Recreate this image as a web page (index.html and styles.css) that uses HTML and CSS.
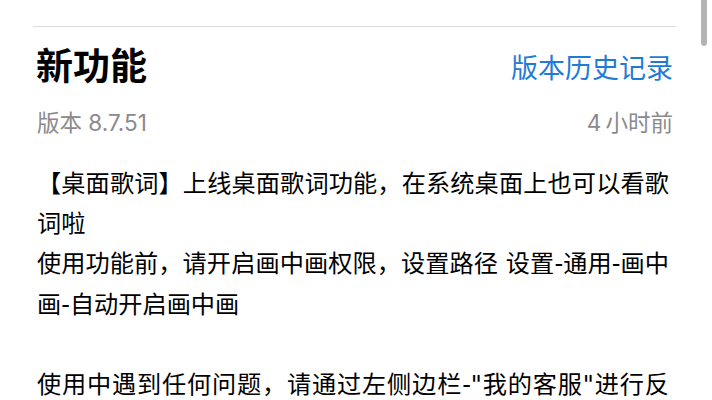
FILE: index.html
```html
<!DOCTYPE html>
<html lang="zh-CN">
<head>
<meta charset="utf-8">
<link rel="stylesheet" href="styles.css">
</head>
<body>
<div class="page">
  <div class="scrollbar"></div>
  <section class="notes">
    <hr class="divider">
    <div class="head">
      <h1 class="title">新功能</h1>
      <a class="history">版本历史记录</a>
    </div>
    <div class="meta">
      <span class="version">版本 8.7.51</span>
      <span class="time">4 小时前</span>
    </div>
    <div class="body">
      <p>【桌面歌词】上线桌面歌词功能，在系统桌面上也可以看歌词啦</p>
      <p>使用功能前，请开启画中画权限，设置路径 设置-通用-画中画-自动开启画中画</p>
      <p class="blank">&nbsp;</p>
      <p>使用中遇到任何问题，请通过左侧边栏-"我的客服"进行反馈</p>
    </div>
  </section>
</div>
</body>
</html>
```

FILE: styles.css
```css
html, body {
  margin: 0;
  padding: 0;
  background: #ffffff;
}
body {
  font-family: "Inter", "Noto Sans CJK SC", sans-serif;
  color: #000;
  overflow: hidden;
}
.page {
  position: relative;
  width: 712px;
  height: 400px;
  overflow: hidden;
}
.scrollbar {
  position: absolute;
  right: 5px;
  top: -6px;
  width: 6px;
  height: 52px;
  border-radius: 3px;
  background: #b4b4b4;
}
.notes {
  margin: 0 36px 0 33px;
  padding-top: 26px;
}
.divider {
  margin: 0;
  border: 0;
  height: 1px;
  background: #dcdcdc;
}
.head {
  display: flex;
  justify-content: space-between;
  align-items: center;
  margin-top: 18px;
  padding-left: 3px;
  height: 44px;
}
.title {
  margin: 0;
  font-size: 37px;
  line-height: 44px;
  font-weight: 700;
  color: #000;
}
.history {
  font-size: 27px;
  line-height: 44px;
  color: #1f7bd4;
  margin-top: 4px;
  margin-right: 3px;
}
.meta {
  display: flex;
  justify-content: space-between;
  align-items: center;
  margin-top: 19px;
  padding-left: 4px;
  height: 30px;
  font-size: 22.5px;
  line-height: 30px;
  color: #8a8a8e;
}
.time {
  margin-right: 3px;
  word-spacing: -2px;
}
.body {
  margin-top: 26px;
  width: 632px;
  padding-left: 4px;
  font-family: "DejaVu Sans", "Noto Sans CJK SC", sans-serif;
  font-size: 24.2px;
  line-height: 40.2px;
  text-align: justify;
  color: #000;
}
.body p {
  margin: 0;
}
```
